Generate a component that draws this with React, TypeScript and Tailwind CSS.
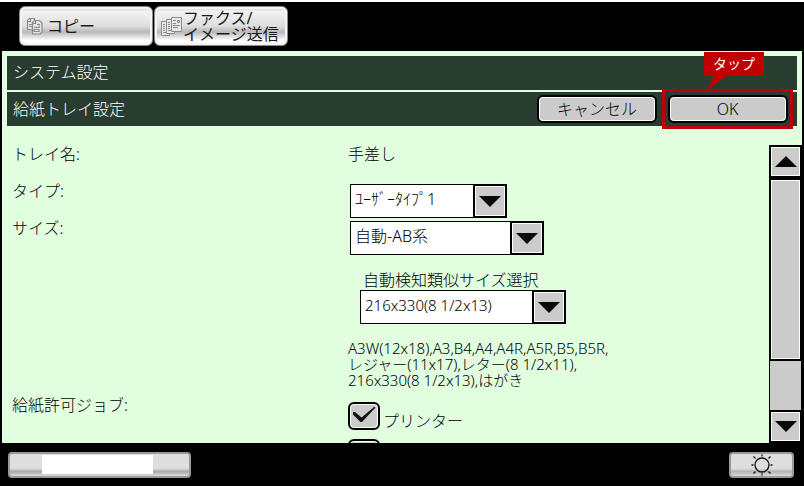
import { ReactNode, useState } from "react";

function CopyIcon() {
  return (
    <svg width="20" height="18" viewBox="0 0 20 18" className="shrink-0" fill="#e4e4e4" stroke="#8c8c8c" strokeWidth="1.2">
      <path d="M3.500 1.500h5v2h2v9h-9v-9z" />
      <path d="M1.500 4.500h3v-3M3 7.500h3M3 9.500h3" />
      <path d="M8.500 3.500h5l2.500 2.500v9l-2 2H6.500V5.500z" />
      <path d="M6.500 6.500h3v-3M11 7.500h3M8 10.500h5v-2M8 12.500h5v2H8z" />
    </svg>
  );
}

function FaxIcon() {
  return (
    <svg width="21" height="19" viewBox="0 0 21 19" className="shrink-0" fill="#e8e8e8" stroke="#8c8c8c" strokeWidth="1">
      <path d="M.5 4.500h8v14h-8z" />
      <path d="M2 7.500h2M2 9.500h2M2 11.500h2M2 13.500h2M2 15.500h4" />
      <path d="M5.500 2.500h8v14h-8z" />
      <path d="M7 5.500h2M7 7.500h2M7 9.500h2M7 11.500h2M7 13.500h4" />
      <path d="M10.500.5h10v14h-10z" />
      <path d="M12 3.500h3M16.500 3.500h2v2h-2zM12 6.500h3M12 8.500h7M12 10.500h5" />
    </svg>
  );
}

function SunIcon() {
  return (
    <svg width="22" height="22" viewBox="0 0 22 22" fill="none" stroke="#111" strokeWidth="1.3" aria-hidden="true">
      <circle cx="11" cy="11" r="7" />
      <path d="M11 .5v2M11 19.500v2M.5 11h2M19.500 11h2M2.500 2.500l2 2M17.500 17.500l2 2M2.500 19.500l2-2M17.500 4.500l2-2" />
    </svg>
  );
}

function Arrow({ up = false }: { up?: boolean }) {
  return (
    <svg width="22" height="11" viewBox="0 0 22 11" fill="#0a0a0a" aria-hidden="true">
      <path d={up ? "M0 11L11 0L22 11z" : "M0 0H22L11 11z"} />
    </svg>
  );
}

function ModeTab({ icon, children }: { icon: ReactNode; children: ReactNode }) {
  return (
    <button
      type="button"
      className="flex h-10 w-[134px] items-center gap-px rounded-md border border-[#8a8a8a] bg-[linear-gradient(#cfcfcf,#f2f2f2_12%,#dedede_50%,#b9b9b9_66%,#ffffff_88%)] pl-1.5 text-left text-base/4 font-normal text-[#1a1a1a] shadow-[inset_0_0_0_2px_#f4f4f4]"
    >
      {icon}
      <span className="whitespace-nowrap">{children}</span>
    </button>
  );
}

function ActionButton({ children }: { children: ReactNode }) {
  return (
    <button
      type="button"
      className="h-7 w-[120px] rounded-md border-2 border-black bg-[#cbcbcb] text-base/5 text-black inset-ring inset-ring-white"
    >
      {children}
    </button>
  );
}

function ScrollButton({ label, up = false }: { label: string; up?: boolean }) {
  return (
    <button
      type="button"
      aria-label={label}
      className="flex h-[33px] shrink-0 items-center justify-center border-2 border-black bg-[#cbcbcb] inset-ring inset-ring-white"
    >
      <Arrow up={up} />
    </button>
  );
}

function Picker({ id, className, options }: { id: string; className: string; options: string[] }) {
  return (
    <div className={`relative h-[34px] ${className}`}>
      <select
        id={id}
        className="h-full w-full appearance-none rounded-none border border-black bg-white pr-9 pb-1 pl-1 text-black"
      >
        {options.map((option) => (
          <option key={option}>{option}</option>
        ))}
      </select>
      <span className="pointer-events-none absolute top-0 right-0 flex h-full w-[34px] items-center justify-center border-2 border-black bg-[#cbcbcb] inset-ring inset-ring-white">
        <Arrow />
      </span>
    </div>
  );
}

function JobCheck({ name, children, defaultOn = false }: { name: string; children?: ReactNode; defaultOn?: boolean }) {
  const [on, setOn] = useState(defaultOn);
  return (
    <label className="flex h-7 items-center gap-[3px]">
      <span className="relative h-7 w-8 shrink-0">
        <input
          type="checkbox"
          aria-label={name}
          checked={on}
          onChange={(e) => setOn(e.target.checked)}
          className="block h-7 w-8 appearance-none rounded-md border-2 border-black bg-[#cbcbcb] inset-ring inset-ring-white"
        />
        {on && (
          <svg viewBox="0 0 32 28" className="pointer-events-none absolute inset-0" fill="#111">
            <path d="M5 10L7 10L13.500 15.500L26 5L27.500 5.500L14 20H12.500L5 12.500z" />
          </svg>
        )}
      </span>
      <span className="pt-2.5">{children}</span>
    </label>
  );
}

export default function App() {
  return (
    <div className="flex h-screen flex-col overflow-hidden border-t-2 border-white bg-black font-['Noto_Sans','Noto_Sans_CJK_JP',sans-serif] text-base/5 font-light text-black">
      <nav className="flex shrink-0 gap-px px-[19px] pt-1 pb-[5px]">
        <ModeTab icon={<CopyIcon />}>コピー</ModeTab>
        <ModeTab icon={<FaxIcon />}>
          ファクス/
          <br />
          イメージ送信
        </ModeTab>
      </nav>

      <main className="mx-0.5 flex min-h-0 flex-1 flex-col bg-[#e1ffdf] pt-[5px]">
        <header className="flex shrink-0 flex-col gap-0.5 px-[5px] text-white">
          <h1 className="bg-[#283c30] px-1.5 pt-1.5 pb-2">システム設定</h1>
          <div className="flex h-[34px] items-center bg-[#283c30] pr-1 pl-1.5">
            <h2 className="flex-1">給紙トレイ設定</h2>
            <ActionButton>キャンセル</ActionButton>
            <div className="relative ml-[5px] flex h-10 w-[131px] items-center justify-center border-3 border-[#c00000]">
              <ActionButton>OK</ActionButton>
              <div className="absolute -top-10 left-[39px] w-[60px] bg-[#c00000] py-0.5 text-center text-sm/5 font-normal text-white">
                タップ
                <svg width="20" height="14" viewBox="0 0 20 14" fill="#c00000" className="absolute top-full left-[3px]" aria-hidden="true">
                  <path d="M7 0H20L0 14z" />
                </svg>
              </div>
            </div>
          </div>
        </header>

        <div className="flex min-h-0 flex-1">
          <div className="grid min-w-0 flex-1 auto-rows-max grid-cols-[336px_1fr] overflow-hidden pt-[18px] pl-2.5">
            <p>トレイ名:</p>
            <p className="pb-[17px]">手差し</p>

            <label htmlFor="tray-type">タイプ:</label>
            <div className="pt-[3px] pl-0.5">
              <Picker id="tray-type" className="w-[157px]" options={["ﾕｰｻﾞｰﾀｲﾌﾟ1", "ﾕｰｻﾞｰﾀｲﾌﾟ2"]} />
            </div>

            <label htmlFor="tray-size">サイズ:</label>
            <div className="pt-[3px] pl-0.5">
              <Picker id="tray-size" className="w-[194px]" options={["自動-AB系", "自動-インチ系"]} />
              <div className="pt-[15px] pl-2.5">
                <label htmlFor="similar-size" className="block pl-[3px]">
                  自動検知類似サイズ選択
                </label>
                <Picker id="similar-size" className="w-[206px] text-[15px]" options={["216x330(8 1/2x13)"]} />
              </div>
            </div>

            <span />
            <p className="pt-4 pb-[7px] text-[15px]/4">
              A3W(12x18),A3,B4,A4,A4R,A5R,B5,B5R,
              <br />
              レジャー(11x17),レター(8 1/2x11),
              <br />
              216x330(8 1/2x13),はがき
            </p>

            <p>給紙許可ジョブ:</p>
            <div className="flex flex-col gap-[9px] pt-[7px]">
              <JobCheck name="プリンター" defaultOn>
                プリンター
              </JobCheck>
              <JobCheck name="コピー" />
            </div>
          </div>

          <div className="mt-[19px] flex w-[33px] shrink-0 flex-col bg-black">
            <ScrollButton label="上へ" up />
            <div className="flex flex-1 flex-col bg-[#cbcbcb]">
              <div className="h-[79%] border-2 border-black bg-[#cbcbcb] inset-ring inset-ring-white" />
              <div className="flex-1 border-x border-black" />
            </div>
            <ScrollButton label="下へ" />
          </div>
        </div>
      </main>

      <footer className="flex h-[43px] shrink-0 items-center justify-between pr-2.5 pl-2">
        <button
          type="button"
          aria-label="ジョブ状況"
          className="h-[26px] w-[183px] rounded-sm border-2 border-[#9a9a9a] bg-[linear-gradient(#dedede_65%,#a8a8a8_80%,#dcdcdc)] pr-9 pl-8"
        >
          <span className="block h-[19px] bg-white" />
        </button>
        <button
          type="button"
          aria-label="明るさ調整"
          className="flex h-[26px] w-[65px] items-center justify-center rounded-sm border-2 border-[#9a9a9a] bg-[linear-gradient(#dedede_65%,#b4b4b4_80%,#dcdcdc)]"
        >
          <SunIcon />
        </button>
      </footer>
    </div>
  );
}
